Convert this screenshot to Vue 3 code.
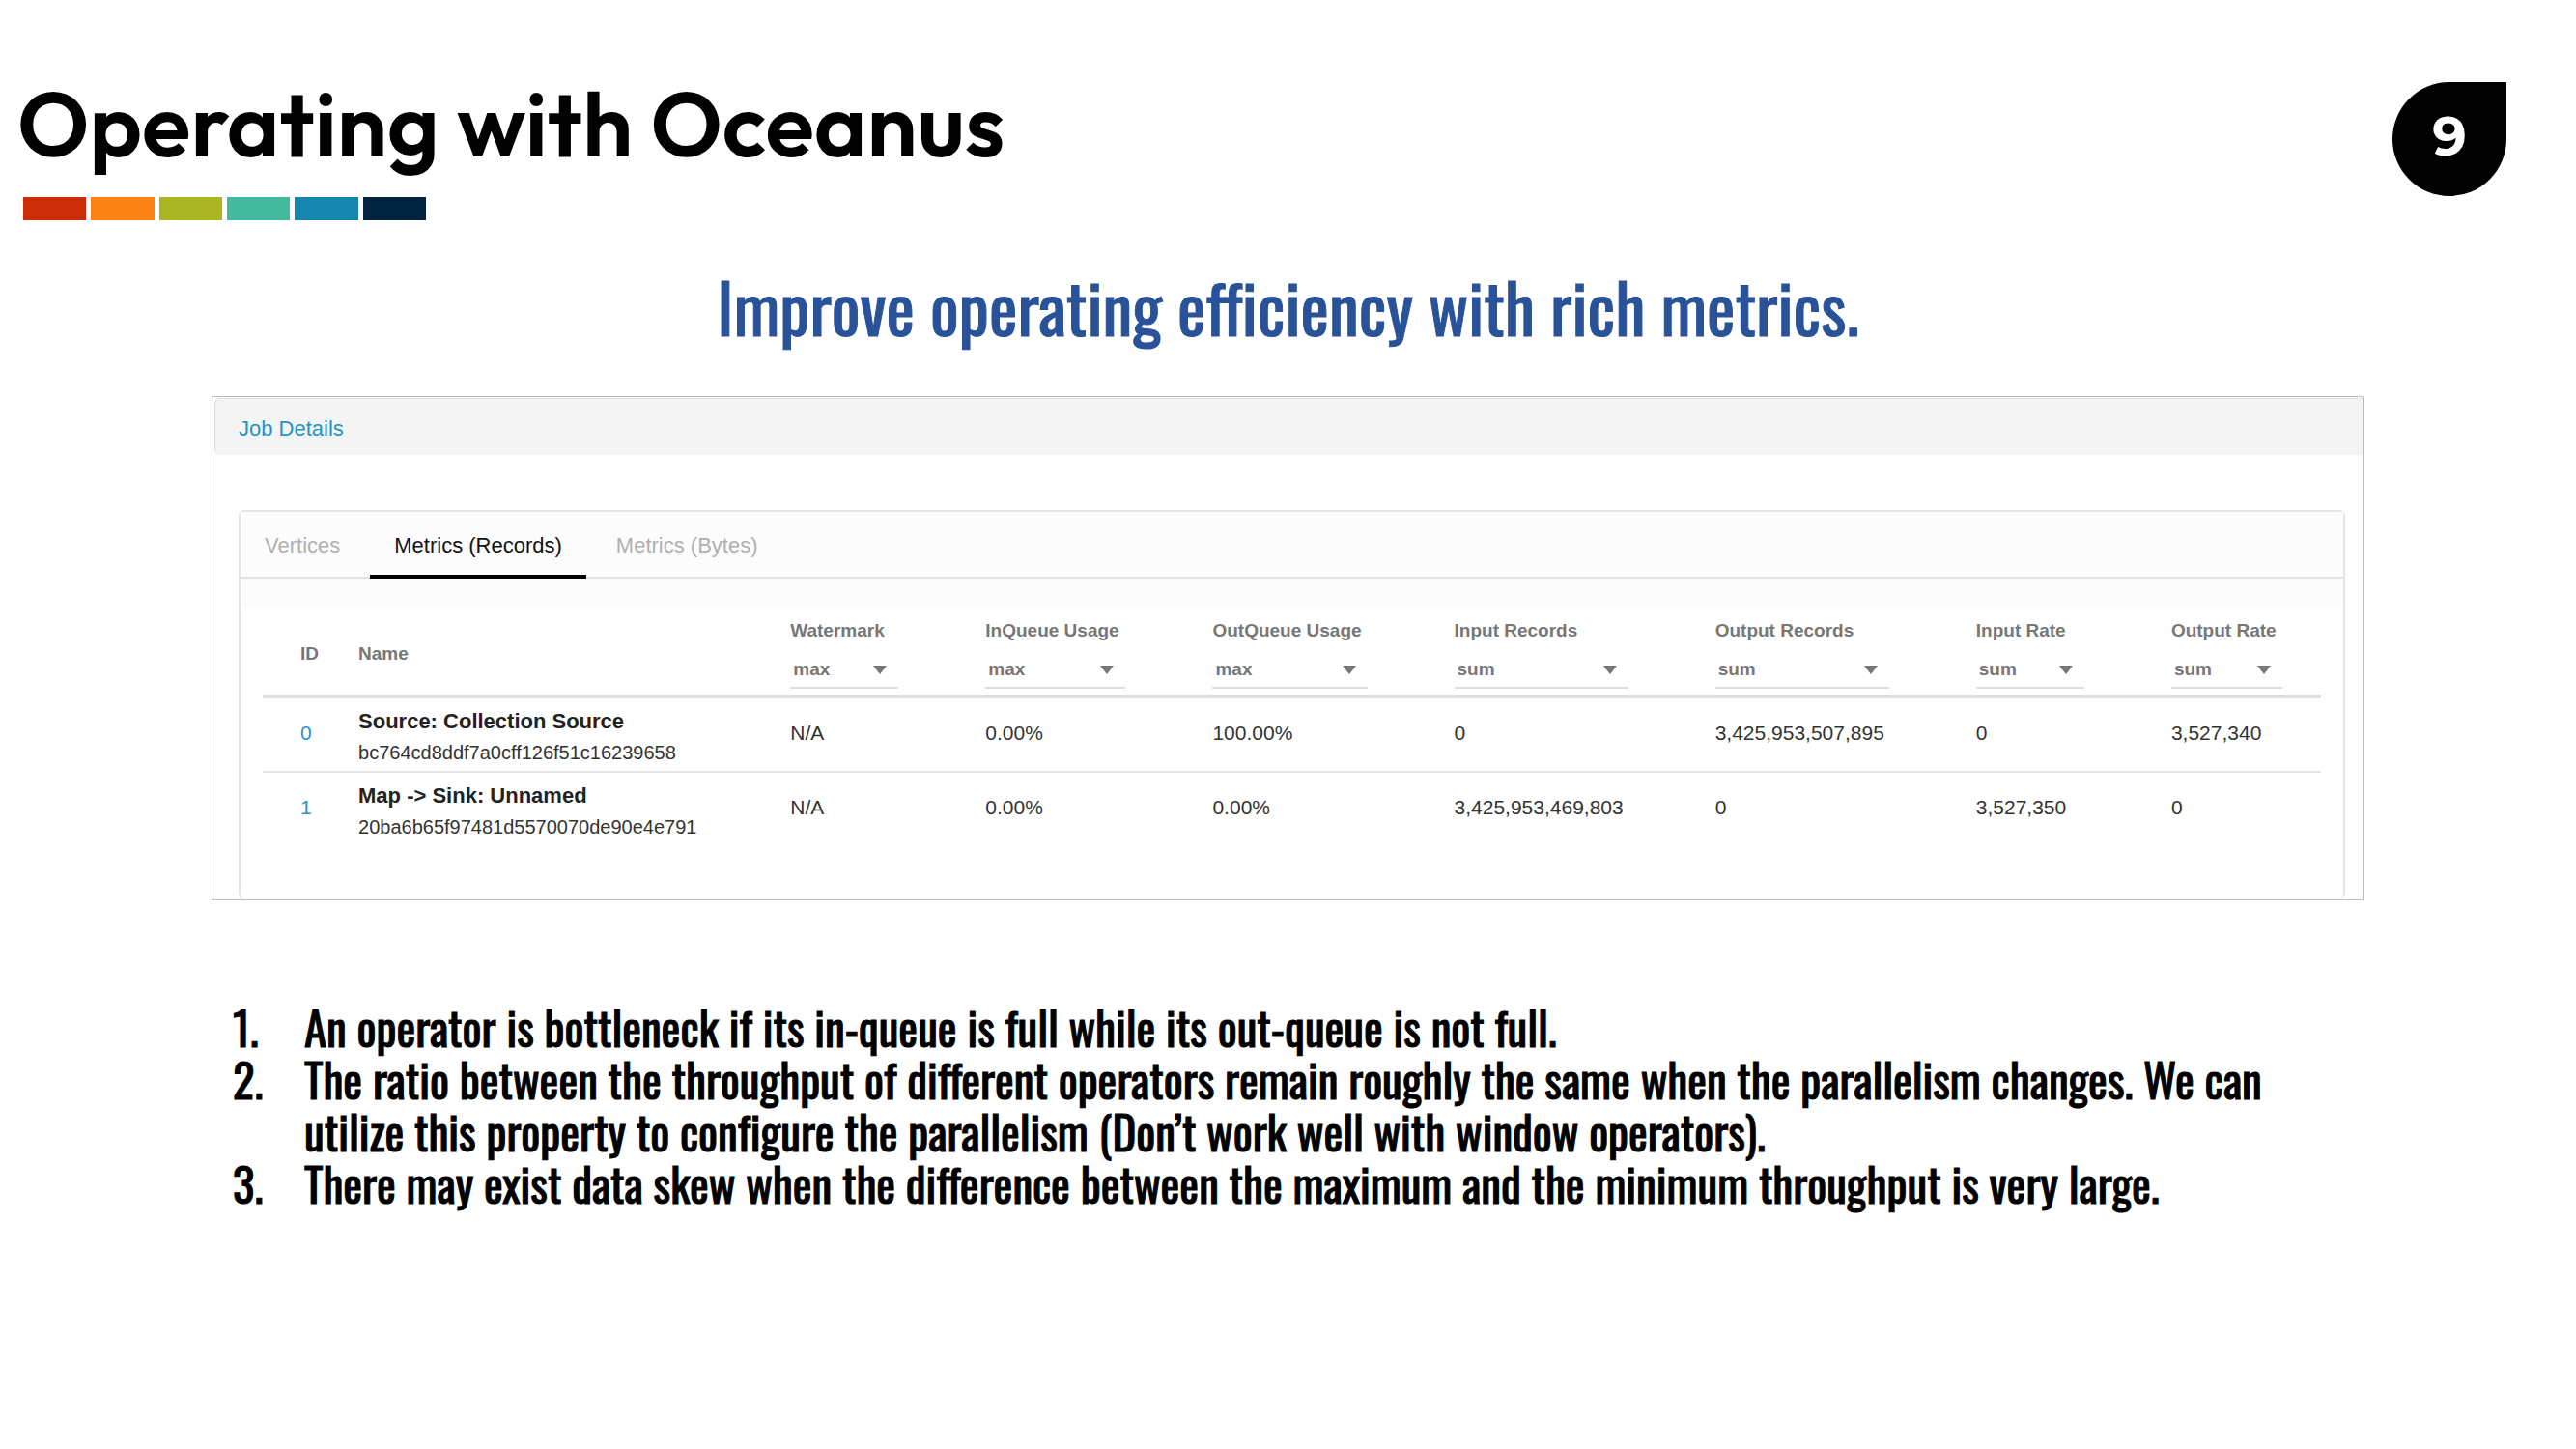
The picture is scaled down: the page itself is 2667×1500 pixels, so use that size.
<script setup>
import { ref } from 'vue'

const swatches = ['red', 'orange', 'lime', 'mint', 'blue', 'navy']
const tabs = ['Vertices', 'Metrics (Records)', 'Metrics (Bytes)']
const activeTab = ref('Metrics (Records)')

const metrics = ref([
  { key: 'watermark', label: 'Watermark', agg: 'max', share: 202 },
  { key: 'inQueue', label: 'InQueue Usage', agg: 'max', share: 235 },
  { key: 'outQueue', label: 'OutQueue Usage', agg: 'max', share: 250 },
  { key: 'inRecords', label: 'Input Records', agg: 'sum', share: 270 },
  { key: 'outRecords', label: 'Output Records', agg: 'sum', share: 270 },
  { key: 'inRate', label: 'Input Rate', agg: 'sum', share: 202 },
  { key: 'outRate', label: 'Output Rate', agg: 'sum', share: 155 }
])

const idShare = 99
const nameShare = 447
const total = metrics.value.reduce((sum, m) => sum + m.share, idShare + nameShare)
const pct = (share) => ({ width: (share / total) * 100 + '%' })

const rows = [
  {
    id: 0,
    name: 'Source: Collection Source',
    hash: 'bc764cd8ddf7a0cff126f51c16239658',
    values: {
      watermark: 'N/A',
      inQueue: '0.00%',
      outQueue: '100.00%',
      inRecords: '0',
      outRecords: '3,425,953,507,895',
      inRate: '0',
      outRate: '3,527,340'
    }
  },
  {
    id: 1,
    name: 'Map -> Sink: Unnamed',
    hash: '20ba6b65f97481d5570070de90e4e791',
    values: {
      watermark: 'N/A',
      inQueue: '0.00%',
      outQueue: '0.00%',
      inRecords: '3,425,953,469,803',
      outRecords: '0',
      inRate: '3,527,350',
      outRate: '0'
    }
  }
]
</script>

<template>
  <main class="slide">
    <header class="top">
      <div class="heading">
        <h1>Operating with Oceanus</h1>
        <div class="swatches">
          <span v-for="s in swatches" :key="s" class="swatch" :class="s"></span>
        </div>
      </div>
      <div class="page-number">9</div>
    </header>

    <h2>Improve operating efficiency with rich metrics.</h2>

    <section class="panel">
      <div class="panel-head"><a href="#job">Job Details</a></div>
      <div class="card">
        <nav class="tabs">
          <button
            v-for="t in tabs"
            :key="t"
            type="button"
            class="tab"
            :class="{ active: t === activeTab }"
            @click="activeTab = t"
          >{{ t }}</button>
        </nav>
        <div class="band"></div>
        <div class="table-wrap">
          <table>
            <colgroup>
              <col :style="pct(idShare)" />
              <col :style="pct(nameShare)" />
              <col v-for="m in metrics" :key="m.key" :style="pct(m.share)" />
            </colgroup>
            <thead>
              <tr>
                <th class="id">ID</th>
                <th>Name</th>
                <th v-for="m in metrics" :key="m.key" class="metric">
                  <label :for="m.key">{{ m.label }}</label>
                  <div class="picker">
                    <select :id="m.key" v-model="m.agg">
                      <option>max</option>
                      <option>min</option>
                      <option>sum</option>
                    </select>
                    <svg class="caret" viewBox="0 0 14 9" aria-hidden="true">
                      <path d="M0 0H14L7 9Z" />
                    </svg>
                  </div>
                </th>
              </tr>
            </thead>
            <tbody>
              <tr v-for="r in rows" :key="r.id">
                <td class="id"><a href="#vertex">{{ r.id }}</a></td>
                <td class="vertex">
                  <strong>{{ r.name }}</strong>
                  <span>{{ r.hash }}</span>
                </td>
                <td v-for="m in metrics" :key="m.key">{{ r.values[m.key] }}</td>
              </tr>
            </tbody>
          </table>
        </div>
      </div>
    </section>

    <ol class="notes">
      <li>An operator is bottleneck if its in-queue is full while its out-queue is not full.</li>
      <li>The ratio between the throughput of different operators remain roughly the same when the parallelism changes. We can<br />utilize this property to configure the parallelism (Don’t work well with window operators).</li>
      <li>There may exist data skew when the difference between the maximum and the minimum throughput is very large.</li>
    </ol>
  </main>
</template>

<style>
body {
  margin: 0;
  background: #fff;
}
</style>

<style scoped>
.slide {
  box-sizing: border-box;
  padding: 84px 72px 72px 18px;
  color: #000;
  font-family: "Liberation Sans", Arial, sans-serif;
}
.top {
  display: flex;
  justify-content: space-between;
  align-items: flex-start;
}
h1 {
  margin: 0;
  font: 600 93px/88px Nexa, Outfit, Urbanist, Montserrat, sans-serif;
}
.swatches {
  display: flex;
  gap: 5px;
  width: 417px;
  margin: 32px 0 0 6px;
}
.swatch {
  flex: 1;
  height: 24px;
}
.red { background: #cc2f07; }
.orange { background: #fb8316; }
.lime { background: #aab522; }
.mint { background: #43ba9d; }
.blue { background: #1686ae; }
.navy { background: #00243f; }
.page-number {
  width: 118px;
  height: 118px;
  margin-top: 1px;
  border-radius: 50% 0 50% 50%;
  background: #000;
  color: #fff;
  text-align: center;
  font: 700 56px/112px Nexa, Montserrat, Inter, sans-serif;
}
h2 {
  margin: 44px -54px 0 0;
  color: #2a5298;
  text-align: center;
  white-space: nowrap;
  font: 400 70px/88px Oswald, "Liberation Sans Narrow", sans-serif;
  font-variant-ligatures: none;
  -webkit-text-stroke: 1px currentColor;
}
.panel {
  margin: 50px 148px 0 201px;
  padding: 1px 0 0 2px;
  border: 1px solid #bdbdbd;
}
.panel-head {
  height: 58px;
  padding-left: 24px;
  border: solid #dedede;
  border-width: 1px 0 0 1px;
  border-radius: 6px 0 0 6px;
  background: #f4f4f4;
  font-size: 22px;
  line-height: 62px;
}
a {
  color: #2494c4;
  text-decoration: none;
}
.card {
  margin: 57px 18px 0 25px;
  border: 2px solid #e4e4e4;
  border-bottom-width: 0;
  border-radius: 6px;
}
.tabs {
  display: flex;
  gap: 6px;
  border-bottom: 2px solid #e2e2e2;
  background: #fcfcfc;
}
.tab {
  height: 69px;
  margin-bottom: -2px;
  padding: 4px 25px 0;
  border: 0;
  border-bottom: 4px solid transparent;
  background: none;
  color: #b0b0b0;
  font: 22px/24px "Liberation Sans", Arial, sans-serif;
}
.active {
  border-bottom-color: #000;
  color: #111;
}
.band {
  height: 31px;
  background: #fcfcfc;
}
.table-wrap {
  padding: 0 23px 56px;
}
table {
  width: 100%;
  table-layout: fixed;
  border-collapse: separate;
  border-spacing: 0;
  font-size: 21px;
  color: #333;
}
th {
  height: 85px;
  padding: 4px 0 0;
  border-bottom: 4px solid #dedede;
  color: #777;
  text-align: left;
  font-size: 19px;
  line-height: 24px;
}
th.metric {
  padding-right: 90px;
}
th.metric:last-child {
  padding-right: 40px;
}
th label {
  display: block;
  white-space: nowrap;
}
.picker {
  position: relative;
  margin-top: 6px;
}
select {
  display: block;
  width: 100%;
  height: 42px;
  padding: 4px 0 0 3px;
  border: 0;
  border-bottom: 2px solid #dedede;
  border-radius: 0;
  appearance: none;
  background: none;
  color: #777;
  font: 700 19px/24px "Liberation Sans", Arial, sans-serif;
}
.caret {
  position: absolute;
  right: 12px;
  top: 18px;
  width: 14px;
  height: 9px;
  fill: #777;
}
td {
  height: 71px;
  padding: 0 0 4px;
  white-space: nowrap;
}
tbody tr:first-child td {
  border-bottom: 2px solid #e4e4e4;
}
.id {
  padding-left: 39px;
}
.vertex {
  padding: 4px 0 0;
}
.vertex strong,
.vertex span {
  display: block;
}
.vertex strong {
  color: #222;
  font-size: 22px;
  line-height: 32px;
}
.vertex span {
  font-size: 20px;
  line-height: 32px;
}
.notes {
  margin: 104px 0 0 223px;
  padding: 0;
  counter-reset: note;
  list-style: none;
  white-space: nowrap;
  font: 400 47px/54px Oswald, "Liberation Sans Narrow", sans-serif;
  font-variant-ligatures: none;
  -webkit-text-stroke: 1px currentColor;
}
.notes li {
  display: flex;
  counter-increment: note;
}
.notes li::before {
  content: counter(note) ".";
  flex: 0 0 74px;
}
</style>
